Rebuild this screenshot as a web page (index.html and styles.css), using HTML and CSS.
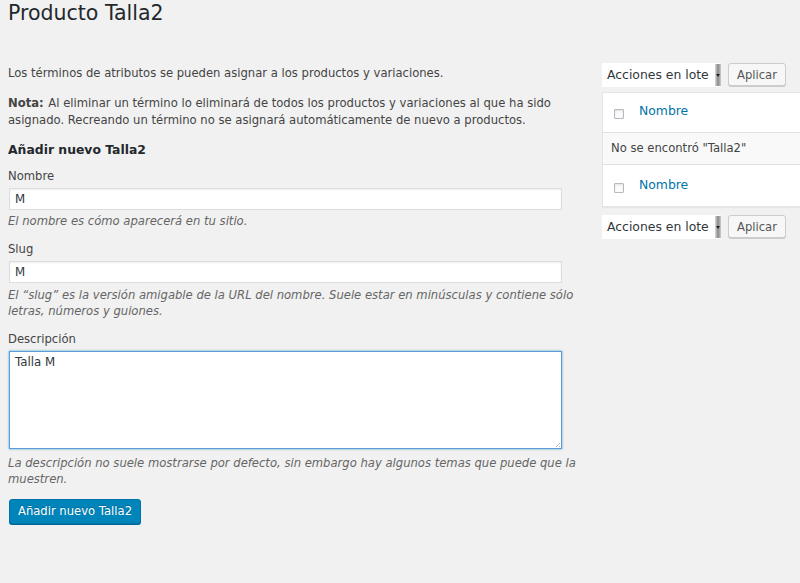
FILE: index.html
```html
<!DOCTYPE html>
<html lang="es">
<head>
<meta charset="utf-8">
<title>Producto Talla2</title>
<link rel="stylesheet" href="styles.css">
</head>
<body>
<div class="wrap">
  <h1 class="page-title">Producto Talla2</h1>
  <div class="cols">
    <div class="col-left">
      <p class="intro">Los términos de atributos se pueden asignar a los productos y variaciones.</p>
      <p class="note"><strong>Nota:</strong> Al eliminar un término lo eliminará de todos los productos y variaciones al que ha sido asignado. Recreando un término no se asignará automáticamente de nuevo a productos.</p>
      <h2 class="form-title">Añadir nuevo Talla2</h2>
      <div class="field field-name">
        <label class="label">Nombre</label>
        <div class="input">M</div>
        <p class="help help-name">El nombre es cómo aparecerá en tu sitio.</p>
      </div>
      <div class="field field-slug">
        <label class="label">Slug</label>
        <div class="input">M</div>
        <p class="help help-multi">El “slug” es la versión amigable de la URL del nombre. Suele estar en minúsculas y contiene sólo letras, números y guiones.</p>
      </div>
      <div class="field field-desc">
        <label class="label">Descripción</label>
        <div class="textarea">Talla M<span class="grip"></span></div>
        <p class="help help-multi help-desc">La descripción no suele mostrarse por defecto, sin embargo hay algunos temas que puede que la muestren.</p>
      </div>
      <button class="btn-primary" type="button">Añadir nuevo Talla2</button>
    </div>
    <div class="col-right">
      <div class="bulk">
        <div class="select">Acciones en lote<span class="arrow"></span></div>
        <button class="btn" type="button">Aplicar</button>
      </div>
      <div class="table">
        <div class="row head"><span class="cb"></span><a class="col-link">Nombre</a></div>
        <div class="row empty">No se encontró "Talla2"</div>
        <div class="row foot"><span class="cb"></span><a class="col-link">Nombre</a></div>
      </div>
      <div class="bulk bulk-bottom">
        <div class="select">Acciones en lote<span class="arrow"></span></div>
        <button class="btn" type="button">Aplicar</button>
      </div>
    </div>
  </div>
</div>
</body>
</html>
```
FILE: styles.css
```css
html, body {
  margin: 0;
  padding: 0;
  background: #f1f1f1;
}
body {
  font-family: "DejaVu Sans", sans-serif;
  font-size: 11.6px;
  color: #444;
  width: 800px;
  height: 583px;
  overflow: hidden;
}
.wrap {
  padding-left: 8px;
}
.page-title {
  margin: 0;
  font-size: 20.5px;
  font-weight: 400;
  line-height: 26px;
  color: #23282d;
}
.cols {
  display: flex;
  gap: 14px;
  margin-top: 37px;
}
.col-left {
  width: 580px;
  flex: none;
  padding-top: 2px;
}
.col-right {
  flex: 1;
  margin-right: -20px;
}
p { margin: 0; }
.intro {
  line-height: 17px;
}
.note {
  margin-top: 13px;
  line-height: 17px;
}
.note strong { font-weight: 700; margin-right: 1px; }
.form-title {
  margin: 12px 0 0;
  font-size: 12.4px;
  font-weight: 700;
  line-height: 17px;
  color: #23282d;
}
.field-name {
  margin-top: 10px;
}
.field-slug {
  margin-top: 11px;
}
.field-desc {
  margin-top: 11.5px;
}
.label {
  display: block;
  line-height: 17px;
  margin-bottom: 3px;
}
.input {
  box-sizing: border-box;
  height: 22px;
  margin-left: 1px;
  width: 553px;
  background: #fff;
  border: 1px solid #ddd;
  box-shadow: inset 0 1px 2px rgba(0,0,0,.07);
  padding: 0 5px;
  line-height: 20px;
  color: #32373c;
  font-size: 11.8px;
}
.help {
  font-style: italic;
  color: #666;
  line-height: 17px;
}
.help-name {
  margin-top: 3px;
}
.help-multi {
  line-height: 16px;
  margin-top: 4px;
}
.help-desc {
  margin-top: 6px;
}
.textarea {
  position: relative;
  box-sizing: border-box;
  height: 98px;
  width: 553px;
  margin-left: 1px;
  background: #fff;
  border: 1px solid #5b9dd9;
  box-shadow: 0 0 2px rgba(30,140,190,.8);
  padding: 2px 5px;
  line-height: 16px;
  color: #32373c;
  font-size: 11.8px;
}
.grip {
  position: absolute;
  right: 1px;
  bottom: 1px;
  width: 4px;
  height: 4px;
  background: linear-gradient(135deg, transparent 50%, #bbb 50%, #bbb 60%, transparent 60%, transparent 80%, #bbb 80%);
}
.btn-primary {
  display: block;
  margin: 12px 0 0 1px;
  box-sizing: border-box;
  height: 25px;
  width: 132px;
  padding: 0;
  font-family: inherit;
  font-size: 11.6px;
  color: #fff;
  background: #0085ba;
  border: 1px solid #0073aa;
  border-radius: 3px;
  box-shadow: 0 1px 0 #006799;
  text-shadow: 0 -1px 1px #006799;
}
.bulk {
  display: flex;
  align-items: flex-start;
  gap: 7px;
  height: 24px;
}
.bulk-bottom {
  margin-top: 8px;
}
.select {
  position: relative;
  box-sizing: border-box;
  width: 119px;
  height: 24px;
  background: #fff;
  padding-left: 5px;
  line-height: 23px;
  font-size: 12.4px;
  color: #32373c;
}
.arrow {
  position: absolute;
  right: 0;
  top: 1px;
  width: 6px;
  height: 22px;
  background: linear-gradient(to right, #ddd, #888 50%, #ccc);
}
.arrow::after {
  content: "";
  position: absolute;
  left: 1px;
  top: 10px;
  border-left: 2px solid transparent;
  border-right: 2px solid transparent;
  border-top: 3px solid #222;
}
.btn {
  box-sizing: border-box;
  height: 23px;
  width: 58px;
  padding: 0;
  font-family: inherit;
  font-size: 11.6px;
  color: #555;
  background: #f7f7f7;
  border: 1px solid #ccc;
  border-radius: 3px;
  box-shadow: 0 1px 0 #ccc;
}
.table {
  margin-top: 5px;
  background: #fff;
  border: 1px solid #e5e5e5;
  box-shadow: 0 1px 1px rgba(0,0,0,.04);
}
.row {
  display: flex;
  align-items: flex-start;
  box-sizing: border-box;
}
.head {
  height: 40px;
  border-bottom: 1px solid #e1e1e1;
  padding-top: 9px;
}
.foot {
  height: 42px;
  border-top: 1px solid #e1e1e1;
  padding-top: 11px;
}
.empty {
  height: 31px;
  background: #f9f9f9;
  padding: 7px 0 0 8px;
  line-height: 17px;
}
.cb {
  box-sizing: border-box;
  width: 10px;
  height: 10px;
  margin: 7px 0 0 11px;
  border: 1px solid #b4b9be;
  border-radius: 1px;
  background: #fbfbfb;
  box-shadow: inset 0 1px 2px rgba(0,0,0,.1);
}
.col-link {
  margin-left: 15px;
  color: #0073aa;
  font-size: 12.4px;
  line-height: 17px;
}
```
